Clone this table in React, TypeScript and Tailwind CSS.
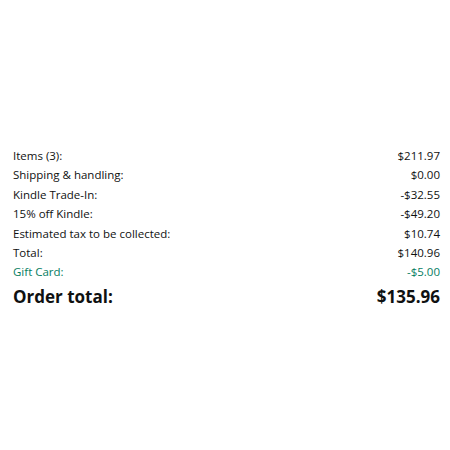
import React from "react";

const rows = [
  { label: "Items (3):", value: "$211.97" },
  { label: "Shipping & handling:", value: "$0.00" },
  { label: "Kindle Trade-In:", value: "-$32.55" },
  { label: "15% off Kindle:", value: "-$49.20" },
  { label: "Estimated tax to be collected:", value: "$10.74" },
  { label: "Total:", value: "$140.96" },
  { label: "Gift Card:", value: "-$5.00", green: true },
];

export default function App() {
  return (
    <div className="w-[450px] h-[450px] bg-white flex flex-col pt-[146px] pl-[13px] pr-[10px] font-['Open_Sans',sans-serif] text-[#0F1111]">
      <div className="flex flex-col">
        {rows.map((r) => (
          <div
            key={r.label}
            className={`flex items-center justify-between text-[11.5px] leading-[19.4px] ${
              r.green ? "text-[#067D62]" : ""
            }`}
          >
            <span>{r.label}</span>
            <span>{r.value}</span>
          </div>
        ))}
        <div className="flex items-center justify-between text-[17px] font-bold leading-[28px] mt-[1px]">
          <span>Order total:</span>
          <span>$135.96</span>
        </div>
      </div>
    </div>
  );
}
